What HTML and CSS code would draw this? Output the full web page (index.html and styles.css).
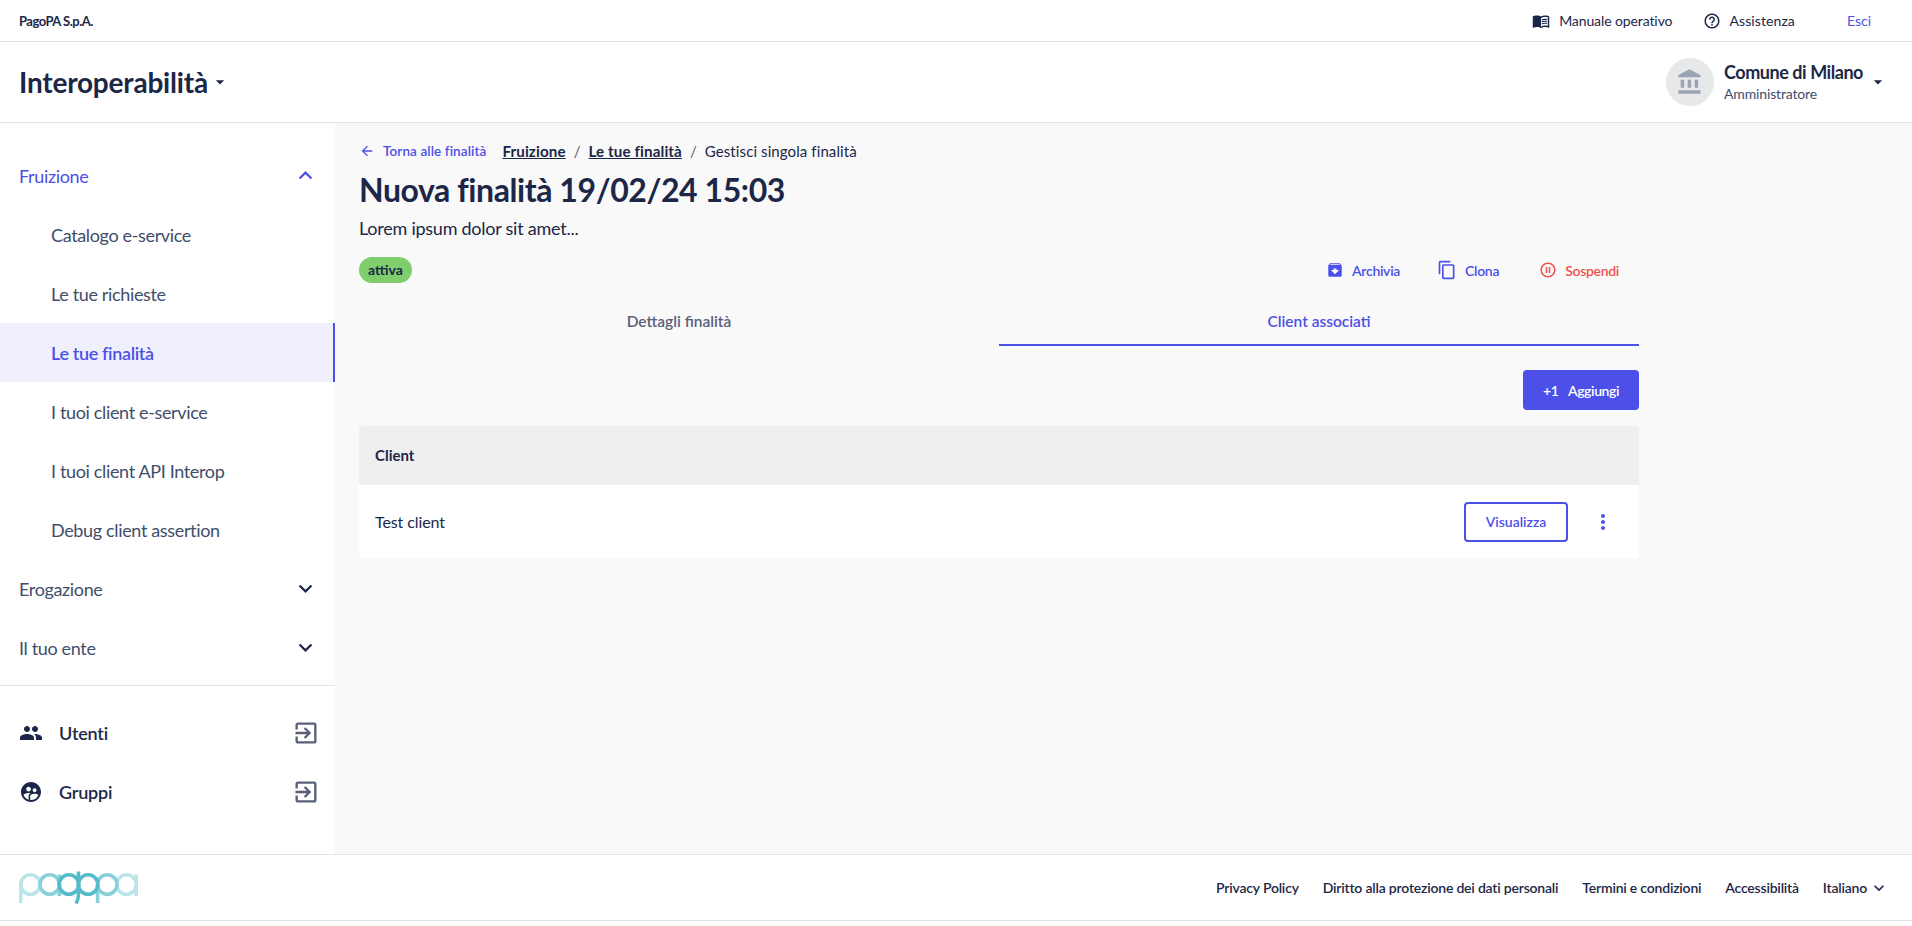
FILE: index.html
```html
<!DOCTYPE html>
<html lang="it">
<head>
  <meta charset="UTF-8">
  <title>Nuova finalità - Interoperabilità</title>
  <link rel="stylesheet" href="styles.css">
</head>
<body>

  <div class="topbar">
    <span class="azienda">PagoPA S.p.A.</span>
    <div class="topbar-link link-manuale">
      <svg class="icona-18" viewBox="0 0 24 24"><path d="M21 5c-1.11-.35-2.33-.5-3.5-.5-1.95 0-4.05.4-5.5 1.5-1.45-1.1-3.55-1.5-5.5-1.5S2.45 4.9 1 6v14.65c0 .25.25.5.5.5.1 0 .15-.05.25-.05C3.1 20.45 5.05 20 6.5 20c1.95 0 4.05.4 5.5 1.5 1.35-.85 3.8-1.5 5.5-1.5 1.65 0 3.35.3 4.75 1.05.1.05.15.05.25.05.25 0 .5-.25.5-.5V6c-.6-.45-1.25-.75-2-1zm0 13.5c-1.1-.35-2.3-.5-3.5-.5-1.7 0-4.15.65-5.5 1.5V8c1.35-.85 3.8-1.5 5.5-1.5 1.2 0 2.4.15 3.5.5v11.5z"/><path d="M17.5 10.5c.88 0 1.73.09 2.5.26V9.24c-.79-.15-1.64-.24-2.5-.24-1.7 0-3.24.29-4.5.83v1.66c1.13-.64 2.7-.99 4.5-.99zM13 12.49v1.66c1.13-.64 2.7-.99 4.5-.99.88 0 1.73.09 2.5.26V11.9c-.79-.15-1.64-.24-2.5-.24-1.7 0-3.24.3-4.5.83zM17.5 14.33c-1.7 0-3.24.29-4.5.83v1.66c1.13-.64 2.7-.99 4.5-.99.88 0 1.73.09 2.5.26v-1.52c-.79-.16-1.64-.24-2.5-.24z"/><path d="M2 6.5c1.2-.8 2.9-1.2 4.5-1.2s3.6.4 4.7 1.2v13.4c-1.3-.8-3.1-1-4.7-1-1.6 0-3.2.3-4.5.8z"/></svg>
      <span>Manuale operativo</span>
    </div>
    <div class="topbar-link link-assistenza">
      <svg class="icona-18" viewBox="0 0 24 24"><path d="M11 18h2v-2h-2v2zm1-16C6.48 2 2 6.48 2 12s4.48 10 10 10 10-4.48 10-10S17.52 2 12 2zm0 18c-4.41 0-8-3.59-8-8s3.59-8 8-8 8 3.59 8 8-3.59 8-8 8zm0-14c-2.21 0-4 1.79-4 4h2c0-1.1.9-2 2-2s2 .9 2 2c0 2-3 1.75-3 5h2c0-2.25 3-2.5 3-5 0-2.21-1.79-4-4-4z"/></svg>
      <span>Assistenza</span>
    </div>
    <span class="esci">Esci</span>
  </div>

  <header class="header">
    <div class="prodotto">
      <span>Interoperabilità</span>
      <svg class="icona-20" viewBox="0 0 24 24"><path d="M7 10l5 5 5-5z"/></svg>
    </div>
    <div class="ente">
      <div class="avatar">
        <svg viewBox="0 0 24 24"><path d="M4 10v7h3v-7H4zm6 0v7h3v-7h-3zM2 22h19v-3H2v3zm14-12v7h3v-7h-3zm-4.5-9L2 6v2h19V6l-9.5-5z"/></svg>
      </div>
      <div class="ente-testi">
        <strong>Comune di Milano</strong>
        <span>Amministratore</span>
      </div>
      <svg class="icona-20" viewBox="0 0 24 24"><path d="M7 10l5 5 5-5z"/></svg>
    </div>
  </header>

  <div class="corpo">
    <aside class="sidebar">
      <nav class="menu">
        <div class="voce voce-aperta">
          <span>Fruizione</span>
          <svg class="icona-chevron" viewBox="0 0 24 24"><path d="M12 8l-6 6 1.41 1.41L12 10.83l4.59 4.58L18 14z"/></svg>
        </div>
        <div class="sottovoce">Catalogo e-service</div>
        <div class="sottovoce">Le tue richieste</div>
        <div class="sottovoce sottovoce-attiva">Le tue finalità</div>
        <div class="sottovoce">I tuoi client e-service</div>
        <div class="sottovoce">I tuoi client API Interop</div>
        <div class="sottovoce">Debug client assertion</div>
        <div class="voce">
          <span>Erogazione</span>
          <svg class="icona-chevron" viewBox="0 0 24 24"><path d="M16.59 8.59 12 13.17 7.41 8.59 6 10l6 6 6-6z"/></svg>
        </div>
        <div class="voce">
          <span>Il tuo ente</span>
          <svg class="icona-chevron" viewBox="0 0 24 24"><path d="M16.59 8.59 12 13.17 7.41 8.59 6 10l6 6 6-6z"/></svg>
        </div>
      </nav>
      <div class="menu-esterni">
        <div class="esterno">
          <svg class="icona-24" viewBox="0 0 24 24"><path d="M16 11c1.66 0 2.99-1.34 2.99-3S17.66 5 16 5c-1.66 0-3 1.34-3 3s1.34 3 3 3zm-8 0c1.66 0 2.99-1.34 2.99-3S9.66 5 8 5C6.34 5 5 6.34 5 8s1.34 3 3 3zm0 2c-2.33 0-7 1.17-7 3.5V19h14v-2.5c0-2.33-4.67-3.5-7-3.5zm8 0c-.29 0-.62.02-.97.05 1.16.84 1.97 1.97 1.97 3.45V19h6v-2.5c0-2.33-4.67-3.5-7-3.5z"/></svg>
          <span>Utenti</span>
          <svg class="icona-esci" viewBox="0 0 24 24"><path d="M10.09 15.59 11.5 17l5-5-5-5-1.41 1.41L12.67 11H3v2h9.67l-2.58 2.59zM19 3H5c-1.11 0-2 .9-2 2v4h2V5h14v14H5v-4H3v4c0 1.1.89 2 2 2h14c1.1 0 2-.9 2-2V5c0-1.1-.9-2-2-2z"/></svg>
        </div>
        <div class="esterno">
          <svg class="icona-24" viewBox="0 0 24 24"><path d="M11.99 2c-5.52 0-10 4.48-10 10s4.48 10 10 10 10-4.48 10-10-4.48-10-10-10zm3.61 6.34c1.07 0 1.93.86 1.93 1.93 0 1.07-.86 1.93-1.93 1.93-1.07 0-1.93-.86-1.93-1.93-.01-1.07.86-1.93 1.93-1.93zm-6-1.58c1.3 0 2.36 1.06 2.36 2.36 0 1.3-1.06 2.36-2.36 2.36s-2.36-1.06-2.36-2.36c0-1.31 1.05-2.36 2.36-2.36zm0 9.13v3.75c-2.4-.75-4.3-2.6-5.14-4.96 1.05-1.12 3.67-1.69 5.14-1.69.53 0 1.2.08 1.9.22-1.64.87-1.9 2.02-1.9 2.68zM11.99 20c-.27 0-.53-.01-.79-.04v-4.07c0-1.42 2.94-2.13 4.4-2.13 1.07 0 2.92.39 3.84 1.15-1.17 2.97-4.06 5.09-7.45 5.09z"/></svg>
          <span>Gruppi</span>
          <svg class="icona-esci" viewBox="0 0 24 24"><path d="M10.09 15.59 11.5 17l5-5-5-5-1.41 1.41L12.67 11H3v2h9.67l-2.58 2.59zM19 3H5c-1.11 0-2 .9-2 2v4h2V5h14v14H5v-4H3v4c0 1.1.89 2 2 2h14c1.1 0 2-.9 2-2V5c0-1.1-.9-2-2-2z"/></svg>
        </div>
      </div>
    </aside>

    <main class="contenuto">
      <div class="briciole">
        <span class="torna">
          <svg class="icona-16" viewBox="0 0 24 24"><path d="M20 11H7.83l5.59-5.59L12 4l-8 8 8 8 1.41-1.41L7.83 13H20v-2z"/></svg>
          Torna alle finalità
        </span>
        <a class="briciola-link">Fruizione</a>
        <span class="separatore">/</span>
        <a class="briciola-link">Le tue finalità</a>
        <span class="separatore">/</span>
        <span class="briciola">Gestisci singola finalità</span>
      </div>

      <h1>Nuova finalità 19/02/24 15:03</h1>
      <p class="descrizione">Lorem ipsum dolor sit amet...</p>

      <div class="stato-azioni">
        <span class="chip">attiva</span>
        <div class="azioni">
          <span class="azione">
            <svg class="icona-18" viewBox="0 0 24 24"><path d="M20.54 5.23l-1.39-1.68C18.88 3.21 18.47 3 18 3H6c-.47 0-.88.21-1.16.55L3.46 5.23C3.17 5.57 3 6.02 3 6.5V19c0 1.1.9 2 2 2h14c1.1 0 2-.9 2-2V6.5c0-.48-.17-.93-.46-1.27zM12 17.5 6.5 12H10v-2h4v2h3.5L12 17.5zM5.12 5l.81-1h12l.94 1H5.12z"/></svg>
            Archivia
          </span>
          <span class="azione">
            <svg class="icona-20 icona-clona" viewBox="0 0 24 24"><path d="M16 1H4c-1.1 0-2 .9-2 2v14h2V3h12V1zm3 4H8c-1.1 0-2 .9-2 2v14c0 1.1.9 2 2 2h11c1.1 0 2-.9 2-2V7c0-1.1-.9-2-2-2zm0 16H8V7h11v14z"/></svg>
            Clona
          </span>
          <span class="azione azione-rossa">
            <svg class="icona-18" viewBox="0 0 24 24"><path d="M9 16h2V8H9v8zm3-14C6.48 2 2 6.48 2 12s4.48 10 10 10 10-4.48 10-10S17.52 2 12 2zm0 18c-4.41 0-8-3.59-8-8s3.59-8 8-8 8 3.59 8 8-3.59 8-8 8zm1-4h2V8h-2v8z"/></svg>
            Sospendi
          </span>
        </div>
      </div>

      <div class="tabs">
        <div class="tab">Dettagli finalità</div>
        <div class="tab tab-attivo">Client associati</div>
      </div>

      <div class="riga-aggiungi">
        <button class="btn-aggiungi"><span>+1</span> Aggiungi</button>
      </div>

      <div class="tabella">
        <div class="tabella-testa">Client</div>
        <div class="tabella-riga">
          <span class="client-nome">Test client</span>
          <button class="btn-visualizza">Visualizza</button>
          <svg class="icona-more" viewBox="0 0 24 24"><path d="M12 8c1.1 0 2-.9 2-2s-.9-2-2-2-2 .9-2 2 .9 2 2 2zm0 2c-1.1 0-2 .9-2 2s.9 2 2 2 2-.9 2-2-.9-2-2-2zm0 6c-1.1 0-2 .9-2 2s.9 2 2 2 2-.9 2-2-.9-2-2-2z"/></svg>
        </div>
      </div>
    </main>
  </div>

  <footer class="footer">
    <svg class="logo" viewBox="0 -2 119 33" stroke-width="3.6">
      <g stroke="#bce5e9">
        <circle cx="11.5" cy="11.5" r="9.7"/>
        <path d="M1.8 11.5V30"/>
        <circle cx="107.5" cy="11.5" r="9.7"/>
        <path d="M117.2 1.5V23"/>
      </g>
      <g stroke="#88d1d9">
        <circle cx="30.7" cy="11.5" r="9.7"/>
        <path d="M40.4 1.5V23"/>
        <circle cx="88.3" cy="11.5" r="9.7"/>
        <path d="M78.6 11.5V30"/>
      </g>
      <g stroke="#54bcc9">
        <circle cx="49.9" cy="11.5" r="9.7"/>
        <circle cx="69.1" cy="11.5" r="9.7"/>
        <path d="M59.5 -1.5V21c0 4-1 7-2.5 9.5"/>
      </g>
    </svg>
    <div class="footer-link">
      <a>Privacy Policy</a>
      <a>Diritto alla protezione dei dati personali</a>
      <a>Termini e condizioni</a>
      <a>Accessibilità</a>
      <a class="lingua">Italiano
        <svg viewBox="0 0 24 24"><path d="M16.59 8.59 12 13.17 7.41 8.59 6 10l6 6 6-6z"/></svg>
      </a>
    </div>
  </footer>

</body>
</html>
```

FILE: styles.css
```css
* {
  box-sizing: border-box;
}

body {
  font-family: Lato, "Noto Sans", sans-serif;
  color: #17324d;
  background-color: white;
  margin: 0;
  height: 926px;
  overflow: hidden;
}

svg {
  fill: currentColor;
  flex-shrink: 0;
}

.icona-16 { width: 16px; height: 16px; }
.icona-18 { width: 18px; height: 18px; }
.icona-20 { width: 20px; height: 20px; }
.icona-24 { width: 24px; height: 24px; }

/* barra in alto */
.topbar {
  height: 42px;
  display: flex;
  align-items: center;
  padding: 0 41px 0 19px;
  border-bottom: 1px solid #e3e3e3;
  font-size: 14px;
  color: #1c2747;
}

.azienda {
  font-weight: 700;
  font-size: 13px;
  letter-spacing: -0.5px;
  margin-right: auto;
}

.topbar-link {
  display: flex;
  align-items: center;
  gap: 9px;
}

.link-manuale {
  letter-spacing: -0.1px;
  margin-right: 31px;
}

.link-assistenza {
  letter-spacing: 0.1px;
  gap: 8px;
  margin-right: 52px;
}

.esci {
  color: #4c4fe8;
}

/* testata */
.header {
  height: 81px;
  display: flex;
  align-items: center;
  justify-content: space-between;
  padding: 0 24px 0 19px;
  border-bottom: 1px solid #e3e3e3;
  color: #1c2747;
}

.prodotto {
  display: flex;
  align-items: center;
  gap: 2px;
  font-size: 28px;
  font-weight: 700;
  letter-spacing: -0.2px;
}

.ente {
  display: flex;
  align-items: center;
}

.avatar {
  width: 48px;
  height: 48px;
  border-radius: 50%;
  background: #e6e8ea;
  color: #9ba4b3;
  display: flex;
  align-items: center;
  justify-content: center;
  margin-right: 10px;
}

.avatar svg {
  width: 28px;
  height: 28px;
}

.ente-testi {
  display: flex;
  flex-direction: column;
  margin-right: 5px;
  padding-bottom: 2px;
}

.ente-testi strong {
  font-size: 18px;
  font-weight: 700;
  line-height: 26px;
  letter-spacing: -0.45px;
}

.ente-testi span {
  font-size: 14px;
  line-height: 18px;
  letter-spacing: -0.15px;
  color: #414d6b;
}

/* corpo */
.corpo {
  height: 731px;
  display: flex;
}

.sidebar {
  width: 335px;
  flex-shrink: 0;
  padding-top: 23px;
}

.menu {
  padding-bottom: 8px;
  border-bottom: 1px solid #e3e3e3;
}

.voce {
  height: 59px;
  display: flex;
  align-items: center;
  justify-content: space-between;
  padding: 0 16px 0 19px;
  font-size: 18px;
  letter-spacing: -0.35px;
  color: #414d6b;
}

.icona-chevron {
  width: 27px;
  height: 27px;
  color: #1c2747;
}

.voce-aperta,
.voce-aperta svg {
  color: #4c4fe8;
}

.sottovoce {
  height: 59px;
  display: flex;
  align-items: center;
  padding-left: 51px;
  font-size: 18px;
  letter-spacing: -0.35px;
  color: #414d6b;
}

.sottovoce-attiva {
  background: #f0f0fd;
  color: #4c4fe8;
  font-weight: 600;
  border-right: 2px solid #4c4fe8;
}

.menu-esterni {
  padding-top: 17px;
}

.esterno {
  height: 59px;
  display: flex;
  align-items: center;
  padding: 0 15px 0 19px;
  font-size: 18px;
  font-weight: 600;
  letter-spacing: -0.2px;
  color: #1c2747;
}

.esterno span {
  margin-left: 16px;
  margin-right: auto;
}

.icona-esci {
  width: 28px;
  height: 28px;
  color: #58607a;
}

/* contenuto */
.contenuto {
  flex: 1;
  padding: 16px 0 0 24px;
  background-color: #f9f9f9;
}

.briciole {
  display: flex;
  align-items: center;
  height: 24px;
  font-size: 15px;
  letter-spacing: 0.1px;
  color: #1c2747;
}

.torna {
  display: flex;
  align-items: center;
  gap: 8px;
  font-size: 13.5px;
  font-weight: 600;
  color: #4c4fe8;
  margin-right: 16px;
}

.briciola-link {
  font-size: 15.2px;
  font-weight: 700;
  text-decoration: underline;
}

.separatore {
  margin: 0 8px;
  color: #58607a;
}

h1 {
  font-size: 32px;
  line-height: 40px;
  font-weight: 700;
  letter-spacing: -0.42px;
  color: #1c2747;
  margin: 7px 0 0;
}

.descrizione {
  font-size: 18px;
  line-height: 24px;
  letter-spacing: -0.25px;
  margin: 6px 0 0;
  color: #1c2747;
}

.stato-azioni {
  display: flex;
  align-items: center;
  justify-content: space-between;
  width: 1280px;
  height: 26px;
  margin-top: 17px;
  padding-right: 20px;
}

.chip {
  height: 26px;
  width: 53px;
  border-radius: 13px;
  background: #7fcd6d;
  font-size: 14px;
  font-weight: 700;
  line-height: 26px;
  text-align: center;
  color: #1c2747;
}

.azioni {
  display: flex;
  gap: 40px;
}

.azione {
  display: flex;
  align-items: center;
  gap: 8px;
  font-size: 14px;
  font-weight: 600;
  letter-spacing: -0.3px;
  color: #4c4fe8;
}

.icona-clona {
  margin-left: -3px;
}

.azione-rossa {
  color: #f0504f;
}

.tabs {
  display: flex;
  width: 1280px;
  height: 47px;
  margin-top: 16px;
}

.tab {
  flex: 1;
  text-align: center;
  line-height: 44px;
  font-size: 15.5px;
  font-weight: 600;
  color: #58607a;
}

.tab-attivo {
  color: #4c4fe8;
  border-bottom: 2px solid #4c4fe8;
}

.riga-aggiungi {
  display: flex;
  justify-content: flex-end;
  width: 1280px;
  margin-top: 24px;
}

.btn-aggiungi {
  width: 116px;
  height: 40px;
  background-color: #4c4fe8;
  color: white;
  border: none;
  border-radius: 4px;
  font-family: inherit;
  font-size: 14px;
  font-weight: 600;
  letter-spacing: -0.4px;
}

.btn-aggiungi span {
  margin-right: 7px;
}

.tabella {
  width: 1280px;
  margin-top: 16px;
}

.tabella-testa {
  height: 59px;
  line-height: 59px;
  padding-left: 16px;
  background: #efefef;
  border-radius: 4px 4px 0 0;
  font-size: 15px;
  font-weight: 700;
  color: #1c2747;
}

.tabella-riga {
  height: 73px;
  display: flex;
  align-items: center;
  padding: 0 24px 0 16px;
  background: white;
  border-radius: 0 0 4px 4px;
}

.client-nome {
  font-size: 16px;
  letter-spacing: -0.1px;
  margin-right: auto;
  color: #1c2747;
}

.btn-visualizza {
  width: 104px;
  height: 40px;
  background: white;
  border: 2px solid #4c4fe8;
  border-radius: 4px;
  color: #4c4fe8;
  font-family: inherit;
  font-size: 14px;
  font-weight: 600;
}

.icona-more {
  width: 24px;
  height: 24px;
  color: #4c4fe8;
  margin-left: 23px;
}

/* piede */
.footer {
  height: 67px;
  display: flex;
  align-items: center;
  justify-content: space-between;
  padding: 0 23px 0 19px;
  border-top: 1px solid #e3e3e3;
  border-bottom: 1px solid #e3e3e3;
}

.logo {
  width: 119px;
  height: 33px;
  fill: none;
}

.footer-link {
  display: flex;
  align-items: center;
  gap: 24px;
  font-size: 14px;
  font-weight: 600;
  letter-spacing: -0.2px;
  color: #1c2747;
}

.lingua {
  display: flex;
  align-items: center;
  gap: 2px;
}

.lingua svg {
  width: 20px;
  height: 20px;
}
```
